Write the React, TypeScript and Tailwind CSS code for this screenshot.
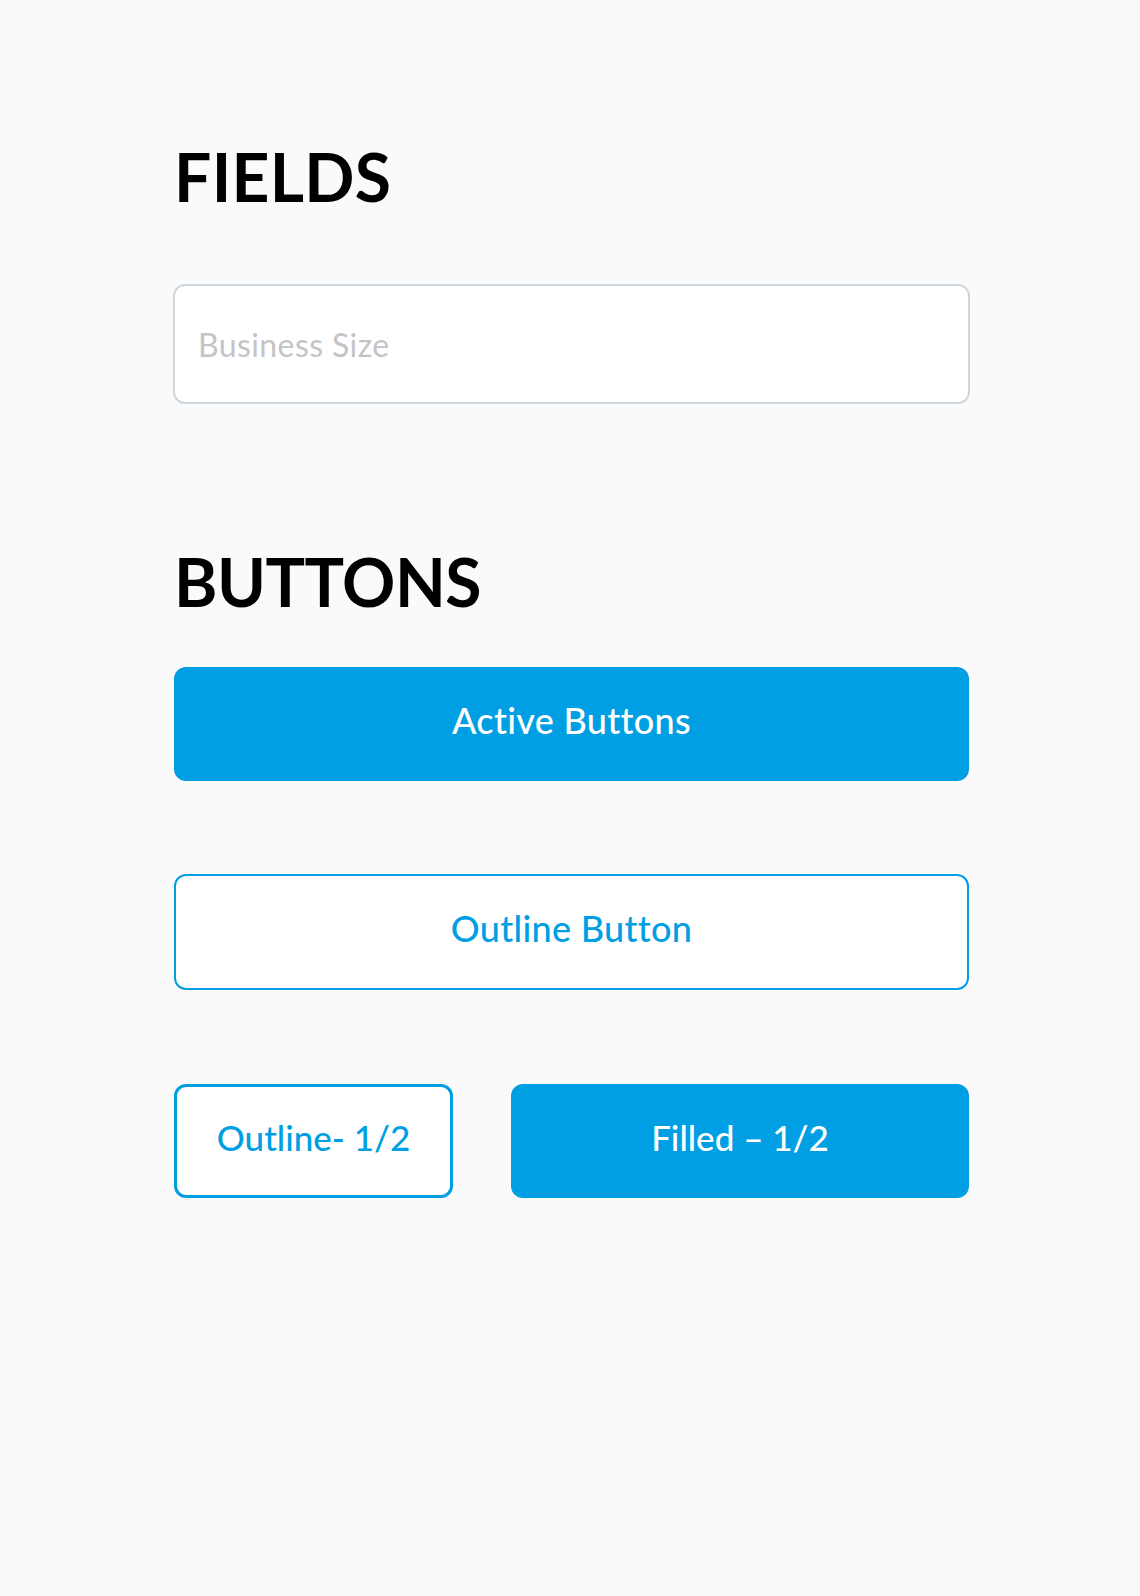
import React from 'react';

const font = { fontFamily: 'Lato, "Open Sans", sans-serif' };

export default function App() {
  return (
    <div className="min-h-[1596px] bg-[#fafafa] pt-[144px] pl-[174px] pr-[171px] text-black" style={font}>
      <h1 className="text-[66px] leading-[66px] font-bold tracking-[0.3px]">FIELDS</h1>

      <input
        type="text"
        placeholder="Business Size"
        className="mt-[74px] ml-[-1px] block h-[120px] w-[calc(100%+2px)] rounded-[12px] border-2 border-[#cdd7df] bg-white pl-[23px] text-[32px] tracking-[0.4px] text-gray-700 outline-none placeholder:text-[#c4c4c8]"
      />

      <h1 className="mt-[145px] text-[66px] leading-[66px] font-bold tracking-[-0.5px]">BUTTONS</h1>

      <button className="mt-[52px] flex h-[114px] w-full items-center justify-center rounded-[12px] bg-[#009fe3] pb-[8px] text-[36px] font-medium tracking-[0.3px] text-white">
        Active Buttons
      </button>

      <button className="mt-[93px] flex h-[116px] w-full items-center justify-center rounded-[12px] border-2 border-[#009fe3] bg-white pb-[8px] text-[36px] font-medium tracking-[0.3px] text-[#009fe3]">
        Outline Button
      </button>

      <div className="mt-[94px] flex gap-[58px]">
        <button className="flex h-[114px] w-[279px] items-center justify-center rounded-[12px] border-[3px] border-[#009fe3] bg-white pb-[8px] text-[35px] font-medium text-[#009fe3]">
          Outline- 1/2
        </button>
        <button className="flex h-[114px] flex-1 items-center justify-center rounded-[12px] bg-[#009fe3] pb-[8px] text-[35px] font-medium text-white">
          Filled – 1/2
        </button>
      </div>
    </div>
  );
}
